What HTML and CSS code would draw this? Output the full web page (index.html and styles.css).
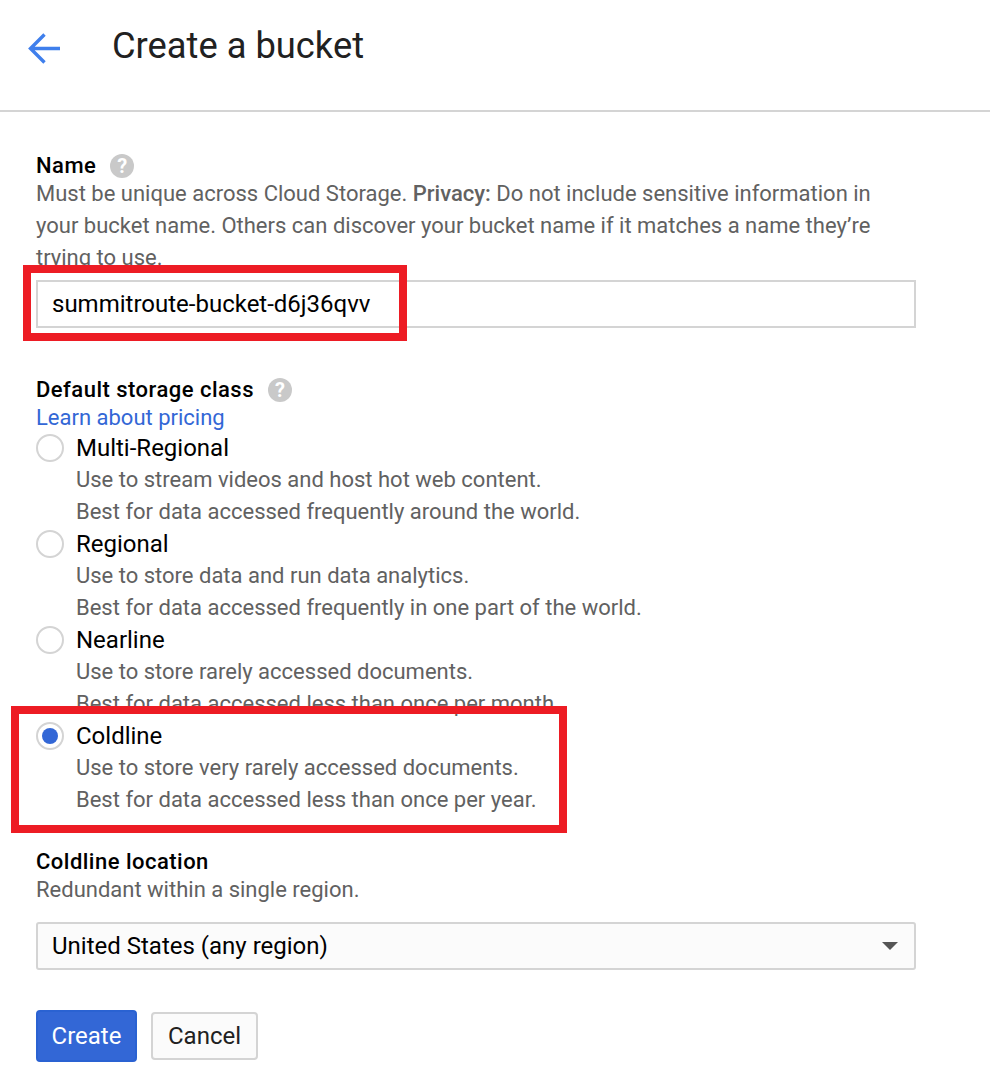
FILE: index.html
```html
<!DOCTYPE html>
<html lang="en">
<head>
<meta charset="utf-8">
<title>Create a bucket</title>
<link rel="stylesheet" href="styles.css">
</head>
<body>
<header class="header">
  <svg class="back" width="34" height="34" viewBox="0 0 34 34" aria-hidden="true"><path d="M32 16.5H4M16.5 2.5 2.5 16.5 16.5 30.5" fill="none" stroke="#3f7fec" stroke-width="3.4"/></svg>
  <h1 class="title">Create a bucket</h1>
</header>
<main class="form">
  <div class="label-row"><span class="label">Name</span><span class="help">?</span></div>
  <p class="desc">Must be unique across Cloud Storage. <b class="strong">Privacy:</b> Do not include sensitive information in your bucket name. Others can discover your bucket name if it matches a name they’re trying to use.</p>
  <div class="field name-field">summitroute-bucket-d6j36qvv</div>

  <div class="label-row storage-label"><span class="label">Default storage class</span><span class="help">?</span></div>
  <a class="link" href="#">Learn about pricing</a>
  <div class="option"><span class="radio"></span><div class="option-body"><div class="option-name">Multi-Regional</div><div class="desc">Use to stream videos and host hot web content.</div><div class="desc">Best for data accessed frequently around the world.</div></div></div>
  <div class="option"><span class="radio"></span><div class="option-body"><div class="option-name">Regional</div><div class="desc">Use to store data and run data analytics.</div><div class="desc">Best for data accessed frequently in one part of the world.</div></div></div>
  <div class="option"><span class="radio"></span><div class="option-body"><div class="option-name">Nearline</div><div class="desc">Use to store rarely accessed documents.</div><div class="desc">Best for data accessed less than once per month.</div></div></div>
  <div class="option"><span class="radio radio-on"></span><div class="option-body"><div class="option-name">Coldline</div><div class="desc">Use to store very rarely accessed documents.</div><div class="desc">Best for data accessed less than once per year.</div></div></div>

  <div class="label-row location-label"><span class="label">Coldline location</span></div>
  <p class="desc">Redundant within a single region.</p>
  <div class="field select-field"><span>United States (any region)</span><span class="caret"></span></div>

  <div class="actions">
    <button class="btn btn-primary" type="button">Create</button>
    <button class="btn btn-plain" type="button">Cancel</button>
  </div>
</main>
<div class="mark mark-name"></div>
<div class="mark mark-coldline"></div>
</body>
</html>
```
FILE: styles.css
```css
* { box-sizing: border-box; }
html, body { margin: 0; padding: 0; background: #fff; }
body {
  position: relative;
  height: 1076px;
  overflow: hidden;
  font-family: Roboto, "Liberation Sans", sans-serif;
  font-size: 22px;
  color: #000;
}
.header {
  height: 112px;
  border-bottom: 2px solid #d4d4d4;
  display: flex;
  align-items: flex-start;
  padding: 32px 0 0 28px;
}
.back { flex: none; }
.title {
  margin: -6px 0 0 50px;
  font-size: 36.3px;
  line-height: 40px;
  font-weight: 400;
  color: #212121;
}
.form { padding: 41px 74px 0 36px; }
.label-row { display: flex; align-items: center; height: 25px; }
.label { font-weight: 500; font-size: 22px; letter-spacing: .48px; }
.help {
  flex: none;
  margin-left: 14px;
  width: 24px;
  height: 24px;
  border-radius: 50%;
  background: #c9c9c9;
  color: #fff;
  font-size: 20px;
  font-weight: 700;
  line-height: 24px;
  text-align: center;
}
.desc { margin: 0; font-size: 22px; line-height: 32px; color: #616161; }
.strong { font-weight: 500; }
.field {
  width: 880px;
  height: 48px;
  border: 2px solid #d4d4d4;
  padding: 0 14px;
  display: flex;
  align-items: center;
  font-size: 24px;
}
.name-field { margin-top: 6px; }
.storage-label { margin-top: 49px; }
.link { display: block; height: 28px; margin-top: 2px; line-height: 28px; color: #3367d6; text-decoration: none; }
.option { display: flex; height: 96px; }
.radio {
  flex: none;
  width: 28px;
  height: 28px;
  margin-top: 2px;
  border: 2px solid #d4d4d4;
  border-radius: 50%;
  background: #fff;
  display: flex;
  align-items: center;
  justify-content: center;
}
.radio-on::after {
  content: "";
  width: 16px;
  height: 16px;
  border-radius: 50%;
  background: #3367d6;
}
.option-body { margin-left: 12px; }
.option-name { font-size: 24px; line-height: 32px; }
.location-label { margin-top: 33px; }
.select-field {
  margin-top: 16px;
  justify-content: space-between;
  background: #fbfbfb;
  border-radius: 3px;
  padding-right: 16px;
}
.caret {
  width: 0;
  height: 0;
  border-left: 8px solid transparent;
  border-right: 8px solid transparent;
  border-top: 8px solid #555;
}
.actions { margin-top: 40px; display: flex; align-items: center; gap: 14px; }
.btn {
  font-family: inherit;
  font-size: 24px;
  border-radius: 4px;
  padding: 0;
}
.btn-primary { width: 101px; height: 52px; background: #3367d6; color: #fff; border: 2px solid #2a62d2; }
.btn-plain { width: 107px; height: 48px; background: #fbfbfb; color: #212121; border: 2px solid #d4d4d4; }
.mark { position: absolute; border: 8px solid #ed1c24; pointer-events: none; }
.mark-name { left: 23px; top: 265px; width: 384px; height: 76px; }
.mark-coldline { left: 11px; top: 706px; width: 556px; height: 127px; }
```
